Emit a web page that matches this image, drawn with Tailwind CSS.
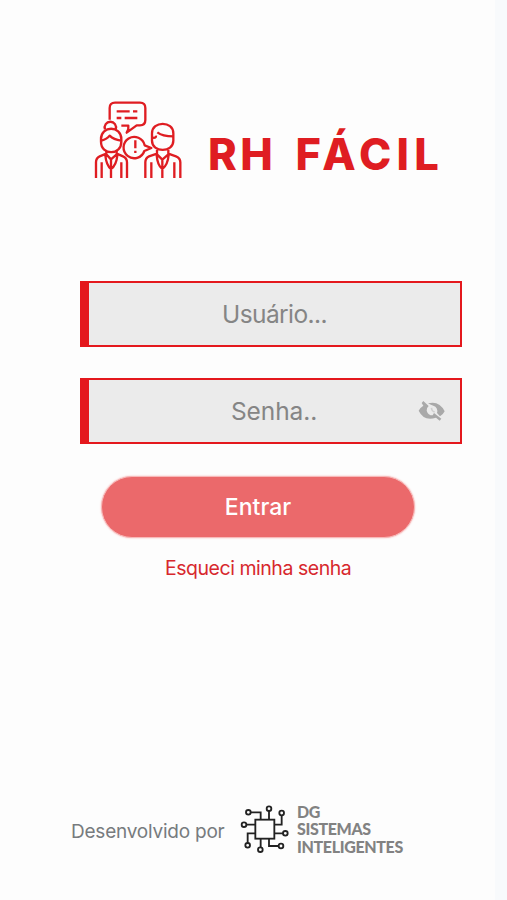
<!DOCTYPE html>
<html lang="pt-BR">
<head>
<meta charset="utf-8">
<title>RH Fácil</title>
<script src="https://cdn.jsdelivr.net/npm/@tailwindcss/browser@4"></script>
</head>
<body class="bg-[#f8fafc]">
<main class="w-[495px] h-[900px] bg-[#fdfdfd] flex flex-col overflow-hidden font-['Inter',sans-serif]">
  <header class="mt-[95px] ml-[85px] h-[90px] flex items-start">
    <svg class="w-[105px] h-[90px] shrink-0" viewBox="0 0 315 270" fill="none" stroke="#df1d22" stroke-width="7" stroke-linejoin="round" stroke-linecap="butt">
      <path d="M74 74V39Q74 23 90 23H165Q181 23 181 39V75Q181 91 165 91H155L125 113Q132 103 130 92H109"/>
      <path d="M95 49H134M144 49H157M95 69H109M119 69H157"/>
      <path d="M60 103A17 17 0 1 1 92 103"/>
      <path d="M48 132C48 91 109 91 109 132V140C109 182 48 182 48 140Z"/>
      <path d="M49 137Q66 133 74 122Q86 134 108 137"/>
      <path d="M64 168V178L78 193L95 178V168M64 176L44 184Q33 189 33 202V249M95 176L114 184Q126 189 126 202V249M50 202V249M109 202V249M78 193V249M61 181Q64 211 78 222M97 181Q94 211 78 222"/>
      <path d="M179 151A32 32 0 1 0 178 168L199 159Z"/>
      <path d="M151 136V160M151 167V174"/>
      <path d="M201 125V115C201 77 265 77 265 115V137C265 174 201 174 201 137Z"/>
      <path d="M203 128Q214 130 213 122M217 112Q232 124 265 124"/>
      <path d="M216 164V178L232 194L250 178V164M216 176L192 184Q181 189 181 202V249M250 176L273 184Q286 189 286 202V249M199 202V249M268 202V249M232 194V249M215 180Q217 211 232 222M251 180Q248 211 232 222"/>
    </svg>
    <h1 class="ml-[18px] mt-[29px] leading-[60px] text-[43.5px] font-extrabold text-[#df1d22] tracking-[5.2px] [word-spacing:4.5px] whitespace-nowrap"><span class="tracking-[3.5px]">RH</span> FÁCIL</h1>
  </header>
  <form class="flex flex-col">
    <div class="ml-20 mt-24 w-[382px] h-[66px] border-2 border-l-[9px] border-[#e4181d] bg-[#ebebeb] flex items-center justify-center">
      <span class="text-[24.5px] text-[#858585] tracking-[-0.6px]">Usuário...</span>
    </div>
    <div class="ml-20 mt-[31px] w-[382px] h-[66px] border-2 border-l-[9px] border-[#e4181d] bg-[#ebebeb] flex items-center relative">
      <span class="ml-[142px] text-[24.5px] text-[#858585] tracking-[-0.1px]">Senha..</span>
      <svg class="absolute left-[329px] top-[20px] w-[28px] h-[23px]" viewBox="444 375 84 69" fill="#a9a9a9">
        <path d="M455 384L460 378L476 393Q469 399 470 407Q474 421 488 421L492 414L514 431L509 437L498 428Q462 440 446 407Q450 398 460 392Z"/>
        <path d="M474 385Q508 376 524 409Q520 418 510 424L501 414Q505 397 490 392Q483 390 474 385Z"/>
        <path d="M482 399L487 398Q487 407 495 409L493 413Q483 410 482 399Z" fill="#cfcfcf"/>
      </svg>
    </div>
    <button type="button" class="ml-[101px] mt-[32px] w-[314px] h-[62px] rounded-full border border-[#f8b9b9] bg-[#eb696b] text-white text-[23px] font-medium shadow-[0_0_2px_#f7b5b5]">Entrar</button>
    <a class="ml-[165px] mt-[15px] leading-[30px] text-[19.5px] text-[#d7282d] tracking-[-0.47px] whitespace-nowrap">Esqueci minha senha</a>
  </form>
  <footer class="mt-auto mb-[42px] ml-[71px] h-[60px] flex items-center">
    <span class="w-[164px] mt-[8px] text-[19px] text-[#777b7e] tracking-[-0.22px] whitespace-nowrap">Desenvolvido por</span>
    <svg class="w-[60px] h-[60px] shrink-0" viewBox="0 0 180 180" fill="none" stroke="#222" stroke-width="5.500">
      <rect x="61" y="65" width="57" height="57"/>
      <path d="M48 43H77V65M102 39V65M140 52V80H118M34 80H61M118 106H144M61 106H38V135M77 122V148M102 122V144H131"/>
      <circle cx="40" cy="43" r="7"/><circle cx="102" cy="32" r="7"/><circle cx="140" cy="45" r="7"/><circle cx="27" cy="80" r="7"/><circle cx="151" cy="106" r="7"/><circle cx="38" cy="142" r="7"/><circle cx="76" cy="155" r="7"/><circle cx="138" cy="144" r="7"/>
    </svg>
    <div class="ml-[2px] mt-[2px] font-['Lato',sans-serif] font-black text-[16px] leading-[17.5px] text-[#828282] tracking-[-0.35px] whitespace-nowrap">
      <p>DG</p><p>SISTEMAS</p><p>INTELIGENTES</p>
    </div>
  </footer>
</main>
</body>
</html>
